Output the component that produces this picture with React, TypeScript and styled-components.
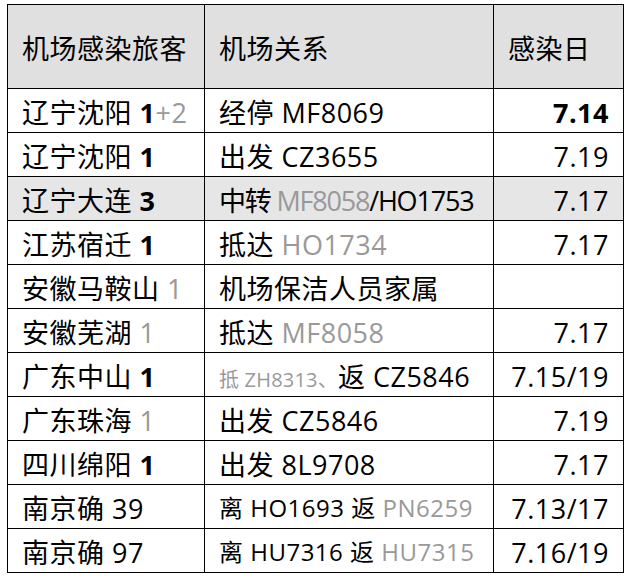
import styled, { createGlobalStyle } from "styled-components";

const GlobalStyle = createGlobalStyle`
  body {
    margin: 0;
    background: #ffffff;
    font-family: "Open Sans", "Noto Sans CJK SC", sans-serif;
    color: #000000;
  }
`;

const Page = styled.div`
  padding: 4px 0 0 7px;
`;

const Table = styled.table`
  border-collapse: collapse;
  table-layout: fixed;
  width: 616px;
  font-size: 27px;
  letter-spacing: 0.5px;
`;

const HeadRow = styled.tr`
  height: 84px;
  background: #e0e0e0;
`;

const Row = styled.tr<{ $shade?: boolean }>`
  height: 44px;
  background: ${(props) => (props.$shade ? "#e6e6e6" : "#ffffff")};
`;

const HeadCell = styled.th`
  border: 1px solid #000000;
  padding: 2px 14px 0;
  font-weight: 400;
  text-align: left;
  vertical-align: middle;
  white-space: nowrap;
`;

const Cell = styled.td<{ $right?: boolean; $small?: boolean; $tight?: boolean }>`
  border: 1px solid #000000;
  padding: 3px 14px 0;
  text-align: ${(props) => (props.$right ? "right" : "left")};
  vertical-align: middle;
  white-space: nowrap;
  overflow: hidden;
  line-height: 1;
  font-size: ${(props) => (props.$small ? "24px" : "27px")};
  letter-spacing: ${(props) => (props.$tight ? "-1.2px" : "0.5px")};
`;

const Bold = styled.b`
  font-weight: 700;
`;

const Gray = styled.span<{ $small?: boolean }>`
  color: #999999;
  font-size: ${(props) => (props.$small ? "20px" : "inherit")};
  letter-spacing: ${(props) => (props.$small ? "0.2px" : "inherit")};
`;

type Part = string | [kind: "b" | "g" | "s", text: string];

interface Case {
  place: Part[];
  link: Part[];
  date: Part[];
  shade?: boolean;
  smallLink?: boolean;
  tight?: boolean;
}

const cases: Case[] = [
  { place: ["辽宁沈阳 ", ["b", "1"], ["g", "+2"]], link: ["经停 MF8069"], date: [["b", "7.14"]] },
  { place: ["辽宁沈阳 ", ["b", "1"]], link: ["出发 CZ3655"], date: ["7.19"] },
  {
    place: ["辽宁大连 ", ["b", "3"]],
    link: ["中转 ", ["g", "MF8058"], "/HO1753"],
    date: ["7.17"],
    shade: true,
    tight: true,
  },
  { place: ["江苏宿迁 ", ["b", "1"]], link: ["抵达 ", ["g", "HO1734"]], date: ["7.17"] },
  { place: ["安徽马鞍山 ", ["g", "1"]], link: ["机场保洁人员家属"], date: [] },
  { place: ["安徽芜湖 ", ["g", "1"]], link: ["抵达 ", ["g", "MF8058"]], date: ["7.17"] },
  { place: ["广东中山 ", ["b", "1"]], link: [["s", "抵 ZH8313、"], "返 CZ5846"], date: ["7.15/19"] },
  { place: ["广东珠海 ", ["g", "1"]], link: ["出发 CZ5846"], date: ["7.19"] },
  { place: ["四川绵阳 ", ["b", "1"]], link: ["出发 8L9708"], date: ["7.17"] },
  { place: ["南京确 39"], link: ["离 HO1693 返 ", ["g", "PN6259"]], date: ["7.13/17"], smallLink: true },
  { place: ["南京确 97"], link: ["离 HU7316 返 ", ["g", "HU7315"]], date: ["7.16/19"], smallLink: true },
];

function Text({ parts }: { parts: Part[] }) {
  return (
    <>
      {parts.map((p, i) => {
        if (typeof p === "string") return <span key={i}>{p}</span>;
        const [kind, text] = p;
        if (kind === "b") return <Bold key={i}>{text}</Bold>;
        if (kind === "s") return <Gray key={i} $small>{text}</Gray>;
        return <Gray key={i}>{text}</Gray>;
      })}
    </>
  );
}

export default function App() {
  return (
    <Page>
      <GlobalStyle />
      <Table>
        <colgroup>
          <col style={{ width: 197 }} />
          <col style={{ width: 289 }} />
          <col style={{ width: 130 }} />
        </colgroup>
        <thead>
          <HeadRow>
            <HeadCell>机场感染旅客</HeadCell>
            <HeadCell>机场关系</HeadCell>
            <HeadCell>感染日</HeadCell>
          </HeadRow>
        </thead>
        <tbody>
          {cases.map((c, i) => (
            <Row key={i} $shade={c.shade}>
              <Cell>
                <Text parts={c.place} />
              </Cell>
              <Cell $small={c.smallLink} $tight={c.tight}>
                <Text parts={c.link} />
              </Cell>
              <Cell $right>
                <Text parts={c.date} />
              </Cell>
            </Row>
          ))}
        </tbody>
      </Table>
    </Page>
  );
}
